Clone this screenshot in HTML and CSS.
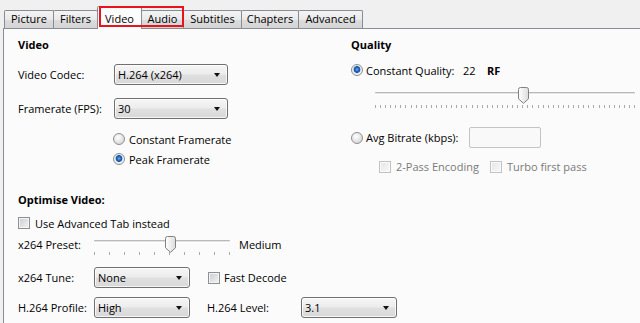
FILE: index.html
```html
<!DOCTYPE html>
<html>
<head>
<meta charset="utf-8">
<link rel="stylesheet" href="styles.css">
</head>
<body>
<div class="tabs">
  <div class="tab tab-picture">Picture</div>
  <div class="tab tab-filters">Filters</div>
  <div class="mark">
    <div class="tab tab-video active">Video</div>
    <div class="tab tab-audio">Audio</div>
  </div>
  <div class="tab tab-subtitles">Subtitles</div>
  <div class="tab tab-chapters">Chapters</div>
  <div class="tab tab-advanced">Advanced</div>
</div>
<div class="panel">
  <div class="top">
    <div class="col-left">
      <div class="heading">Video</div>
      <div class="field field-codec">
        <span class="label label-wide">Video Codec:</span>
        <div class="select sel-main">H.264 (x264)</div>
      </div>
      <div class="field field-fps">
        <span class="label label-wide">Framerate (FPS):</span>
        <div class="select sel-main">30</div>
      </div>
      <div class="option option-first"><span class="radio"></span><span>Constant Framerate</span></div>
      <div class="option"><span class="radio on"></span><span>Peak Framerate</span></div>
    </div>
    <div class="col-right">
      <div class="heading">Quality</div>
      <div class="cq-row">
        <span class="radio on"></span><span class="cq-label">Constant Quality:</span><span class="cq-value">22</span><span class="cq-unit">RF</span>
      </div>
      <div class="slider slider-quality">
        <div class="track"></div>
        <div class="ticks ticks-quality"></div>
        <svg class="thumb" style="left:143px" width="11" height="17" viewBox="0 0 11 17"><defs><linearGradient id="tg1" x1="0" y1="0" x2="1" y2="0"><stop offset="0" stop-color="#ffffff"/><stop offset="1" stop-color="#dcdcdc"/></linearGradient></defs><path d="M2.5 0.5H8.5Q10.5 0.5 10.5 2.5V11.8L5.5 16.3L0.5 11.8V2.5Q0.5 0.5 2.5 0.5Z" fill="url(#tg1)" stroke="#808080"/></svg>
      </div>
      <div class="avg-row">
        <span class="radio"></span><span class="avg-label">Avg Bitrate (kbps):</span><div class="textbox"></div>
      </div>
      <div class="pass-row">
        <span class="check disabled"></span><span class="dim pass-label">2-Pass Encoding</span>
        <span class="check disabled"></span><span class="dim">Turbo first pass</span>
      </div>
    </div>
  </div>
  <div class="bottom">
    <div class="heading">Optimise Video:</div>
    <div class="adv-row"><span class="check"></span><span>Use Advanced Tab instead</span></div>
    <div class="preset-row">
      <span class="label label-narrow">x264 Preset:</span>
      <div class="slider slider-preset">
        <div class="track"></div>
        <div class="ticks ticks-preset"></div>
        <svg class="thumb" style="left:71px" width="11" height="17" viewBox="0 0 11 17"><defs><linearGradient id="tg2" x1="0" y1="0" x2="1" y2="0"><stop offset="0" stop-color="#ffffff"/><stop offset="1" stop-color="#dcdcdc"/></linearGradient></defs><path d="M2.5 0.5H8.5Q10.5 0.5 10.5 2.5V11.8L5.5 16.3L0.5 11.8V2.5Q0.5 0.5 2.5 0.5Z" fill="url(#tg2)" stroke="#808080"/></svg>
      </div>
      <span class="preset-value">Medium</span>
    </div>
    <div class="field field-tune">
      <span class="label label-narrow">x264 Tune:</span>
      <div class="select sel-small">None</div>
      <span class="check fast-check"></span><span>Fast Decode</span>
    </div>
    <div class="field field-profile">
      <span class="label label-narrow">H.264 Profile:</span>
      <div class="select sel-small">High</div>
      <span class="label level-label">H.264 Level:</span>
      <div class="select sel-small">3.1</div>
    </div>
  </div>
</div>
</body>
</html>
```
FILE: styles.css
```css
* { box-sizing: border-box; }
html, body { margin: 0; padding: 0; }
body {
  width: 640px;
  height: 323px;
  overflow: hidden;
  background: #f0f0f0;
  font-family: "Open Sans", "Noto Sans", sans-serif;
  font-size: 11px;
  color: #000;
}

/* tabs */
.tabs {
  display: flex;
  align-items: flex-end;
  height: 28px;
  padding-left: 4px;
  position: relative;
  z-index: 2;
}
.tab {
  flex: none;
  height: 18px;
  margin-right: -1px;
  border: 1px solid #898c95;
  border-bottom: none;
  border-radius: 2px 2px 0 0;
  background: linear-gradient(#f4f4f4, #e9e9e9 50%, #dcdcdc 51%, #d5d5d5);
  line-height: 15px;
  text-align: center;
  color: #000;
}
.tab.active {
  height: 23px;
  margin-bottom: -1px;
  padding-top: 4px;
  background: #fcfcfc;
  position: relative;
  z-index: 1;
}
.tab-picture { width: 50px; }
.tab-filters { width: 45px; }
.tab-video { width: 45px; }
.tab-audio { width: 43px; }
.tab-subtitles { width: 59px; }
.tab-chapters { width: 58px; }
.tab-advanced { width: 65px; }

.mark {
  display: flex;
  align-items: flex-end;
  position: relative;
  margin-right: -1px;
}
.mark .tab-audio { margin-right: 0; }
.mark::after {
  content: "";
  position: absolute;
  left: 2px;
  right: 0;
  top: 0;
  bottom: 1px;
  border: 2px solid #e8141b;
  z-index: 3;
}

/* panel */
.panel {
  margin-left: 3px;
  height: 295px;
  border-left: 1px solid #898c95;
  border-top: 1px solid #898c95;
  background: #fbfbfb;
}
.top {
  display: flex;
  height: 161px;
}
.col-left {
  width: 347px;
  padding: 8px 0 0 14px;
}
.col-right {
  flex: 1;
  padding-top: 8px;
}
.heading {
  font-weight: bold;
  line-height: 16px;
  height: 16px;
}
.field {
  display: flex;
  align-items: center;
}
.field-codec { margin-top: 11px; height: 21px; }
.field-fps { margin-top: 13px; height: 21px; }
.label { flex: none; }
.label-wide { width: 96px; }
.label-narrow { width: 76px; }

.select {
  flex: none;
  position: relative;
  height: 21px;
  border: 1px solid #707070;
  border-radius: 3px;
  background: linear-gradient(#f6f6f6, #ececec 48%, #e0e0e0 52%, #d8d8d8);
  box-shadow: inset 0 0 0 1px rgba(255, 255, 255, 0.75);
  padding-left: 3px;
  line-height: 19px;
}
.select::after {
  content: "";
  position: absolute;
  right: 7px;
  top: 8px;
  border-left: 3.5px solid transparent;
  border-right: 3.5px solid transparent;
  border-top: 4px solid #111;
}
.sel-main { width: 114px; }
.sel-small { width: 96px; }

.option {
  display: flex;
  align-items: center;
  gap: 4px;
  height: 20px;
  padding-left: 95px;
}
.option-first { margin-top: 10px; }

.radio {
  flex: none;
  width: 12px;
  height: 12px;
  border-radius: 50%;
  border: 1px solid #8e8f8f;
  background: radial-gradient(circle at 40% 35%, #ffffff, #e8e8e8 45%, #cfcfcf);
}
.radio.on {
  background: radial-gradient(circle at 50% 45%, #6fb1f0 0, #2f71c4 1.6px, #164f9a 3px, #b9d6f2 3.6px, #f2f2f2 4.2px, #e2e2e2 100%);
}

.check {
  flex: none;
  width: 12px;
  height: 12px;
  border: 1px solid #8e8f8f;
  background: linear-gradient(135deg, #c9ccd1, #f3f4f6);
  box-shadow: inset 0 0 0 1px #f4f4f4;
}
.check.disabled {
  border-color: #c2c2c2;
  background: linear-gradient(135deg, #e6e6e6, #f8f8f8);
  box-shadow: inset 0 0 0 1px #fafafa;
}
.dim { color: #7a7a7a; }

/* right column */
.cq-row {
  display: flex;
  align-items: center;
  height: 16px;
  margin-top: 9px;
}
.cq-label { margin-left: 3px; width: 97px; }
.cq-value { width: 24px; }
.cq-unit { font-weight: bold; }

.slider {
  position: relative;
  height: 24px;
}
.slider-quality {
  width: 260px;
  margin: 7px 0 0 24px;
}
.track {
  position: absolute;
  left: 0;
  right: 0;
  top: 7px;
  height: 3px;
  border-top: 1px solid #b9b9b9;
  border-bottom: 1px solid #ffffff;
  background: #e4e4e4;
  border-radius: 1px;
}
.ticks {
  position: absolute;
  left: 0;
  right: 0;
  height: 3px;
}
.ticks-quality {
  top: 20px;
  background: repeating-linear-gradient(to right, #a9a9a9 0 1px, transparent 1px 5.08px);
}
.thumb {
  position: absolute;
  top: 2px;
}

.avg-row {
  display: flex;
  align-items: center;
  height: 21px;
  margin-top: 18px;
}
.avg-label { margin-left: 3px; width: 103px; }
.textbox {
  width: 72px;
  height: 21px;
  border: 1px solid #c4c4c4;
  border-radius: 2px;
  background: #f9f9f9;
}
.pass-row {
  display: flex;
  align-items: center;
  gap: 5px;
  height: 17px;
  margin-top: 10px;
  padding-left: 28px;
}
.pass-label { margin-right: 6px; }

/* bottom */
.bottom {
  padding: 2px 0 0 14px;
}
.adv-row {
  display: flex;
  align-items: center;
  gap: 5px;
  height: 16px;
  margin-top: 7px;
}
.preset-row {
  display: flex;
  align-items: flex-start;
  height: 20px;
  margin-top: 6px;
}
.preset-row .label { line-height: 16px; }
.slider-preset {
  width: 136px;
  height: 20px;
  margin-top: -1px;
}
.slider-preset .track { top: 4px; }
.ticks-preset {
  top: 16px;
  background: repeating-linear-gradient(to right, #a9a9a9 0 1px, transparent 1px 15px);
}
.slider-preset .thumb { top: 0; }
.preset-value {
  margin-left: 9px;
  line-height: 16px;
}
.field-tune { margin-top: 10px; height: 21px; }
.fast-check { margin: 0 4px 0 18px; }
.field-profile { margin-top: 9px; height: 21px; }
.level-label { width: 94px; margin-left: 17px; }
```
